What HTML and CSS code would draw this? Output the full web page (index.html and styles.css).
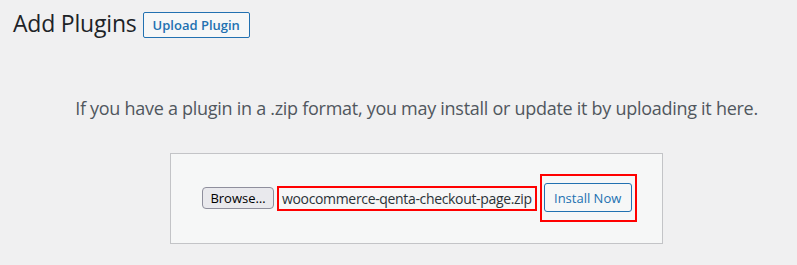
FILE: index.html
```html
<!DOCTYPE html>
<html lang="en">
<head>
    <meta charset="UTF-8">
    <meta name="viewport" content="width=device-width, initial-scale=1.0">
    <title>Add Plugins</title>
    <link rel="stylesheet" href="styles.css">
</head>
<body>
    <div class="wrap">
        <div class="title-row">
            <h1>Add Plugins</h1>
            <a class="page-title-action" href="#">Upload Plugin</a>
        </div>

        <div class="upload-plugin">
            <p class="install-help">If you have a plugin in a .zip format, you may install or update it by uploading it here.</p>
            <form class="wp-upload-form">
                <button type="button" class="browse-btn">Browse…</button>
                <span class="file-name">woocommerce-qenta-checkout-page.zip</span>
                <!-- red mark round the install button -->
                <span class="install-mark">
                    <button type="button" class="install-btn">Install Now</button>
                </span>
            </form>
        </div>
    </div>
</body>
</html>
```

FILE: styles.css
```css
body {
    margin: 0;
    background-color: #f0f0f1;
    font-family: "Open Sans", "Noto Sans", sans-serif;
    color: #1d2327;
    overflow: hidden;
}
.wrap {
    padding-left: 13px;
}
.title-row {
    display: flex;
    align-items: flex-start;
    gap: 6px;
}
h1 {
    margin: 0;
    padding: 9px 0 4px;
    font-size: 23px;
    font-weight: 400;
    line-height: 1.3;
    letter-spacing: -0.2px;
    color: #1d2327;
}
.page-title-action {
    margin-top: 12px;
    padding: 4px 9px;
    border: 1px solid #2271b1;
    border-radius: 2px;
    background-color: #f6f7f7;
    color: #2271b1;
    font-size: 13px;
    font-weight: 600;
    line-height: 16px;
    text-decoration: none;
}
.upload-plugin {
    padding-left: 23px;
    text-align: center;
}
.install-help {
    margin: 52px 0 31px;
    font-size: 18px;
    line-height: 27px;
    letter-spacing: -0.28px;
    color: #50575e;
}
.wp-upload-form {
    display: flex;
    align-items: center;
    box-sizing: border-box;
    width: 493px;
    height: 91px;
    margin: 0 auto;
    padding: 0 0 0 31px;
    background-color: #f6f7f7;
    border: 1px solid #c3c4c7;
}
.browse-btn {
    box-sizing: border-box;
    width: 72px;
    height: 22px;
    padding: 0;
    background-color: #e9e9ed;
    border: 1px solid #8f8f9d;
    border-radius: 4px;
    color: #000;
    font-family: inherit;
    font-size: 13px;
}
.file-name {
    margin-left: 3px;
    padding: 0 3px;
    border: 2px solid #f00;
    color: #2c3338;
    font-size: 14px;
    line-height: 21px;
    letter-spacing: -0.34px;
    white-space: nowrap;
}
.install-mark {
    display: flex;
    margin-left: 3px;
    padding: 7px 3px 8px 2px;
    border: 2px solid #f00;
}
.install-btn {
    box-sizing: border-box;
    width: 88px;
    height: 29px;
    padding: 0;
    background-color: #f6f7f7;
    border: 1px solid #2271b1;
    border-radius: 3px;
    color: #2271b1;
    font-family: inherit;
    font-size: 13px;
    white-space: nowrap;
}
```
